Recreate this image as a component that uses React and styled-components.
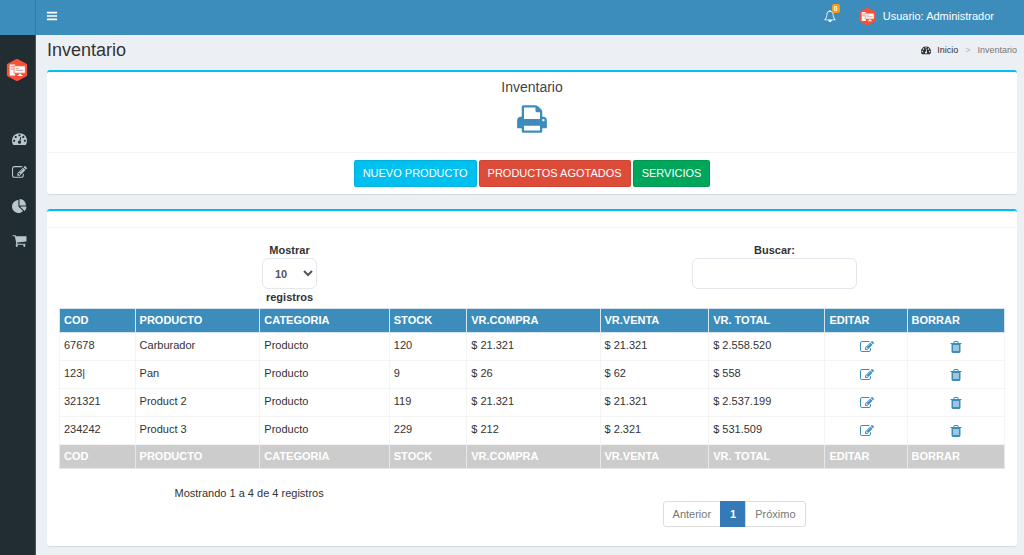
import React from 'react';
import styled, { createGlobalStyle } from 'styled-components';

const icons = {
  bars: 'M1664 1344v128q0 26-19 45t-45 19h-1408q-26 0-45-19t-19-45v-128q0-26 19-45t45-19h1408q26 0 45 19t19 45zm0-512v128q0 26-19 45t-45 19h-1408q-26 0-45-19t-19-45v-128q0-26 19-45t45-19h1408q26 0 45 19t19 45zm0-512v128q0 26-19 45t-45 19h-1408q-26 0-45-19t-19-45v-128q0-26 19-45t45-19h1408q26 0 45 19t19 45z',
  bell: 'M912 1696q0-16-16-16-59 0-101.5-42.5t-42.5-101.5q0-16-16-16t-16 16q0 73 51.5 124.5t124.5 51.5q16 0 16-16zm-666-288h1300q-266-300-266-832 0-51-24-105t-69-103-121.5-80.5-169.5-31.5-169.5 31.5-121.5 80.5-69 103-24 105q0 532-266 832zm1482 0q0 52-38 90t-90 38h-448q0 106-75 181t-181 75-181-75-75-181h-448q-52 0-90-38t-38-90q50-42 91-88t85-119.5 74.5-158.5 50-206 19.5-260q0-152 117-282.5t307-158.5q-8-19-8-39 0-40 28-68t68-28 68 28 28 68q0 20-8 39 190 28 307 158.5t117 282.5q0 139 19.5 260t50 206 74.5 158.5 85 119.5 91 88z',
  dashboard: 'M384 1152q0-53-37.5-90.5t-90.5-37.5-90.5 37.5-37.5 90.5 37.5 90.5 90.5 37.5 90.5-37.5 37.5-90.5zm192-448q0-53-37.5-90.5t-90.5-37.5-90.5 37.5-37.5 90.5 37.5 90.5 90.5 37.5 90.5-37.5 37.5-90.5zm428 481l101-382q6-26-7.5-48.5t-38.5-29.5-48 6.5-30 39.5l-101 382q-60 5-107 43.5t-63 98.5q-20 77 20 146t117 89 146-20 89-117q16-60-6-117t-72-91zm660-33q0-53-37.5-90.5t-90.5-37.5-90.5 37.5-37.5 90.5 37.5 90.5 90.5 37.5 90.5-37.5 37.5-90.5zm-640-640q0-53-37.5-90.5t-90.5-37.5-90.5 37.5-37.5 90.5 37.5 90.5 90.5 37.5 90.5-37.5 37.5-90.5zm448 192q0-53-37.5-90.5t-90.5-37.5-90.5 37.5-37.5 90.5 37.5 90.5 90.5 37.5 90.5-37.5 37.5-90.5zm320 448q0 261-141 483-19 29-54 29h-1402q-35 0-54-29-141-221-141-483 0-182 71-348t191-286 286-191 348-71 348 71 286 191 191 286 71 348z',
  edit: 'M888 1184l116-116-152-152-116 116v56h96v96h56zm440-720q-16-16-33 1l-350 350q-17 17-1 33t33-1l350-350q17-17 1-33zm80 594v190q0 119-84.5 203.5t-203.5 84.5h-832q-119 0-203.5-84.5t-84.5-203.5v-832q0-119 84.5-203.5t203.5-84.5h832q63 0 117 25 15 7 18 23 3 17-9 29l-49 49q-14 14-32 8-23-6-45-6h-832q-66 0-113 47t-47 113v832q0 66 47 113t113 47h832q66 0 113-47t47-113v-126q0-13 9-22l64-64q15-15 35-7t20 29zm-96-738l288 288-672 672h-288v-288zm444 132l-92 92-288-288 92-92q28-28 68-28t68 28l152 152q28 28 28 68t-28 68z',
  pie: 'M768 890l546 546q-106 108-247.5 168t-298.5 60q-209 0-385.5-103t-279.5-279.5-103-385.5 103-385.5 279.5-279.5 385.5-103v762zm187 6h773q0 157-60 298.5t-168 247.5zm709-128h-768v-768q209 0 385.5 103t279.5 279.5 103 385.5z',
  cart: 'M704 1536q0 52-38 90t-90 38-90-38-38-90 38-90 90-38 90 38 38 90zm896 0q0 52-38 90t-90 38-90-38-38-90 38-90 90-38 90 38 38 90zm128-1088v512q0 24-16.5 42.5t-40.5 21.5l-1044 122q13 60 13 70 0 16-24 64h920q26 0 45 19t19 45-19 45-45 19h-1024q-26 0-45-19t-19-45q0-11 8-31.5t16-36 21.5-40 15.5-29.5l-177-823h-204q-26 0-45-19t-19-45 19-45 45-19h256q16 0 28.5 6.5t19.5 15.5 13 24.5 8 26 5.5 29.5 4.5 26h1201q26 0 45 19t19 45z',
  print: 'M448 1536h896v-256h-896v256zm0-640h896v-384h-160q-40 0-68-28t-28-68v-160h-640v640zm1152 64q0-26-19-45t-45-19-45 19-19 45 19 45 45 19 45-19 19-45zm128 0v416q0 13-9.5 22.5t-22.5 9.5h-224v160q0 40-28 68t-68 28h-960q-40 0-68-28t-28-68v-160h-224q-13 0-22.5-9.5t-9.5-22.5v-416q0-79 56.5-135.5t135.5-56.5h64v-544q0-40 28-68t68-28h672q40 0 88 20t76 48l152 152q28 28 48 76t20 88v256h64q79 0 135.5 56.5t56.5 135.5z',
  trash: 'M704 1376v-704q0-14-9-23t-23-9h-64q-14 0-23 9t-9 23v704q0 14 9 23t23 9h64q14 0 23-9t9-23zm256 0v-704q0-14-9-23t-23-9h-64q-14 0-23 9t-9 23v704q0 14 9 23t23 9h64q14 0 23-9t9-23zm256 0v-704q0-14-9-23t-23-9h-64q-14 0-23 9t-9 23v704q0 14 9 23t23 9h64q14 0 23-9t9-23zm-544-992h448l-48-117q-7-9-17-11h-317q-10 2-17 11zm928 32v64q0 14-9 23t-23 9h-96v948q0 83-47 143.5t-113 60.5h-832q-66 0-113-58.5t-47-141.5v-952h-96q-14 0-23-9t-9-23v-64q0-14 9-23t23-9h309l70-167q15-37 54-63t79-26h320q40 0 79 26t54 63l70 167h309q14 0 23 9t9 23z',
};

const menuList = [
  { name: 'Inicio', icon: 'dashboard' },
  { name: 'Inventario', icon: 'edit' },
  { name: 'Reportes', icon: 'pie' },
  { name: 'Ventas', icon: 'cart' },
];

const columns = [
  { name: 'COD', width: '8%' },
  { name: 'PRODUCTO', width: '13.2%' },
  { name: 'CATEGORIA', width: '13.7%' },
  { name: 'STOCK', width: '8.2%' },
  { name: 'VR.COMPRA', width: '14.1%' },
  { name: 'VR.VENTA', width: '11.5%' },
  { name: 'VR. TOTAL', width: '12.3%' },
  { name: 'EDITAR', width: '8.7%' },
  { name: 'BORRAR', width: '10.3%' },
];

const products = [
  ['67678', 'Carburador', 'Producto', '120', '$ 21.321', '$ 21.321', '$ 2.558.520'],
  ['123|', 'Pan', 'Producto', '9', '$ 26', '$ 62', '$ 558'],
  ['321321', 'Product 2', 'Producto', '119', '$ 21.321', '$ 21.321', '$ 2.537.199'],
  ['234242', 'Product 3', 'Producto', '229', '$ 212', '$ 2.321', '$ 531.509'],
];

const Icon = ({ name, size = 14 }) => (
  <IconSvg viewBox="0 0 1792 1792" $size={size} aria-hidden="true">
    <path d={icons[name]} />
  </IconSvg>
);

const Logo = ({ size }) => (
  <LogoSvg viewBox="0 0 24 26" $size={size} aria-hidden="true">
    <path
      d="M12 2.500L21.500 7.500V18.500L12 23.500L2.500 18.500V7.500Z"
      fill="#fb4f38"
      stroke="#fb4f38"
      strokeWidth="3"
      strokeLinejoin="round"
    />
    <path d="M4 7h6v12H4z" fill="#fff" />
    <path d="M5 9.500h3M5 12h3" stroke="#fb4f38" strokeWidth="0.900" />
    <path d="M8.800 8.500h12.200v8h-12.200z" fill="#fff" stroke="#fb4f38" strokeWidth="0.800" />
    <path d="M10.500 11.200h4M10.500 13.300h8.500" stroke="#b98f8a" strokeWidth="0.900" />
    <path d="M14 17h2.500v1.500H18v1h-5.500v-1H14z" fill="#fff" />
  </LogoSvg>
);

const App = () => {
  return (
    <>
      <GlobalStyle />
      <Layout>
        <Brand href="#" aria-label="Inicio" />
        <Header>
          <IconButton aria-label="Menú">
            <Icon name="bars" size={12} />
          </IconButton>
          <UserMenu>
            <NoticeButton aria-label="Notificaciones">
              <Icon name="bell" size={12} />
              <Badge>0</Badge>
            </NoticeButton>
            <UserLink href="#">
              <Logo size={19} />
              Usuario: Administrador
            </UserLink>
          </UserMenu>
        </Header>

        <Sidebar>
          <SidebarLogo>
            <Logo size={24} />
          </SidebarLogo>
          {menuList.map(({ name, icon }) => (
            <SidebarLink key={name} href="#" aria-label={name}>
              <Icon name={icon} size={15} />
            </SidebarLink>
          ))}
        </Sidebar>

        <Content>
          <ContentHeader>
            <h1>Inventario</h1>
            <Breadcrumb>
              <BreadcrumbLink href="#">
                <Icon name="dashboard" size={10} />
                Inicio
              </BreadcrumbLink>
              <Separator>&gt;</Separator>
              <span>Inventario</span>
            </Breadcrumb>
          </ContentHeader>

          <Box>
            <TitleArea>
              <h2>Inventario</h2>
              <PrintLink href="#" aria-label="Imprimir">
                <Icon name="print" size={32} />
              </PrintLink>
            </TitleArea>
            <Actions>
              <ActionButton $color="#00c0ef">NUEVO PRODUCTO</ActionButton>
              <ActionButton $color="#dd4b39">PRODUCTOS AGOTADOS</ActionButton>
              <ActionButton $color="#00a65a">SERVICIOS</ActionButton>
            </Actions>
          </Box>

          <Box>
            <BoxStrip />
            <Filters>
              <Field>
                <label htmlFor="length">Mostrar</label>
                <LengthSelect id="length" defaultValue="10">
                  <option>10</option>
                  <option>25</option>
                  <option>50</option>
                  <option>100</option>
                </LengthSelect>
                <label htmlFor="length">registros</label>
              </Field>
              <Field>
                <label htmlFor="search">Buscar:</label>
                <SearchInput id="search" type="search" />
              </Field>
            </Filters>

            <TableArea>
              <Table>
                <colgroup>
                  {columns.map(({ name, width }) => (
                    <Col key={name} $width={width} />
                  ))}
                </colgroup>
                <thead>
                  <tr>
                    {columns.map(({ name }) => (
                      <HeadCell key={name}>{name}</HeadCell>
                    ))}
                  </tr>
                </thead>
                <tbody>
                  {products.map(product => (
                    <tr key={product[0]}>
                      {product.map((value, index) => (
                        <Cell key={index}>{value}</Cell>
                      ))}
                      <IconCell>
                        <CellLink href="#" aria-label={`Editar ${product[1]}`}>
                          <Icon name="edit" />
                        </CellLink>
                      </IconCell>
                      <IconCell>
                        <CellLink href="#" aria-label={`Borrar ${product[1]}`}>
                          <Icon name="trash" />
                        </CellLink>
                      </IconCell>
                    </tr>
                  ))}
                </tbody>
                <tfoot>
                  <tr>
                    {columns.map(({ name }) => (
                      <FootCell key={name}>{name}</FootCell>
                    ))}
                  </tr>
                </tfoot>
              </Table>
            </TableArea>

            <TableFooter>
              <Info>Mostrando 1 a 4 de 4 registros</Info>
              <Pagination aria-label="Páginas">
                <PageLink href="#">Anterior</PageLink>
                <PageLink href="#" $active>
                  1
                </PageLink>
                <PageLink href="#">Próximo</PageLink>
              </Pagination>
            </TableFooter>
          </Box>
        </Content>
      </Layout>
    </>
  );
};

const GlobalStyle = createGlobalStyle`
  * {
    box-sizing: border-box;
  }

  body {
    margin: 0;
    background-color: #ecf0f5;
    color: #333;
    font-family: 'Liberation Sans', Arial, sans-serif;
    font-size: 11px;
    line-height: 16px;
  }

  h1,
  h2 {
    margin: 0;
    font-weight: 400;
  }

  a {
    text-decoration: none;
  }

  button,
  input,
  select {
    font: inherit;
  }
`;

const IconSvg = styled.svg`
  display: block;
  flex: none;
  width: ${({ $size }) => $size}px;
  height: ${({ $size }) => $size}px;
  fill: currentColor;
`;

const LogoSvg = styled.svg`
  display: block;
  flex: none;
  width: ${({ $size }) => $size}px;
  height: ${({ $size }) => $size}px;
`;

const Layout = styled.div`
  display: grid;
  grid-template-columns: 36px minmax(0, 1fr);
  grid-template-rows: 35px 1fr;
  min-height: 100vh;
`;

const Brand = styled.a`
  background-color: #3c8dbc;
  border-right: 1px solid #3379a3;
`;

const Header = styled.header`
  display: flex;
  align-items: center;
  justify-content: space-between;
  padding: 0 30px 3px 10px;
  background-color: #3c8dbc;
  color: #fff;
`;

const IconButton = styled.button`
  padding: 0;
  border: 0;
  background: none;
  color: inherit;
`;

const UserMenu = styled.div`
  display: flex;
  align-items: center;
  gap: 22px;
`;

const NoticeButton = styled(IconButton)`
  position: relative;
`;

const Badge = styled.span`
  position: absolute;
  top: -6px;
  left: 8px;
  width: 8px;
  border-radius: 2px;
  background-color: #f39c12;
  font-size: 7px;
  font-weight: 700;
  line-height: 9px;
  text-align: center;
`;

const UserLink = styled.a`
  display: flex;
  align-items: center;
  gap: 6px;
  color: #fff;
`;

const Sidebar = styled.nav`
  background-color: #222d32;
  border-right: 1px solid #4a555a;
`;

const SidebarLogo = styled.div`
  padding: 23px 5px 39px;
`;

const SidebarLink = styled.a`
  display: flex;
  align-items: center;
  height: 34px;
  padding-left: 12px;
  color: #b8c7ce;
`;

const Content = styled.main`
  padding: 0 7px 9px 11px;
`;

const ContentHeader = styled.div`
  display: flex;
  align-items: center;
  justify-content: space-between;
  height: 35px;
  padding-bottom: 6px;

  & h1 {
    font-size: 18px;
    line-height: 20px;
  }
`;

const Breadcrumb = styled.nav`
  display: flex;
  align-items: center;
  color: #777;
  font-size: 9px;
`;

const BreadcrumbLink = styled.a`
  display: flex;
  align-items: center;
  gap: 6px;
  color: #333;
`;

const Separator = styled.span`
  padding: 0 7px;
  color: #bbb;
`;

const Box = styled.section`
  border-top: 2px solid #00c0ef;
  border-radius: 3px;
  background-color: #fff;
  box-shadow: 0 1px 1px rgba(0 0 0 / 10%);

  & + & {
    margin-top: 15px;
  }
`;

const TitleArea = styled.div`
  display: flex;
  flex-direction: column;
  align-items: center;
  height: 81px;
  padding-top: 7px;
  border-bottom: 1px solid #f4f4f4;

  & h2 {
    color: #444;
    font-size: 14px;
  }
`;

const PrintLink = styled.a`
  margin-top: 8px;
  color: #3c8dbc;
`;

const Actions = styled.div`
  display: flex;
  justify-content: center;
  gap: 2px;
  padding: 7px;
`;

const ActionButton = styled.button`
  height: 27px;
  padding: 0 8px 2px;
  border: 1px solid rgba(0 0 0 / 8%);
  border-radius: 2px;
  background-color: ${({ $color }) => $color};
  color: #fff;
`;

const BoxStrip = styled.div`
  height: 17px;
  border-bottom: 1px solid #f4f4f4;
`;

const Filters = styled.div`
  display: grid;
  grid-template-columns: 1fr 1fr;
  padding-top: 14px;
`;

const Field = styled.div`
  display: flex;
  flex-direction: column;
  align-items: center;
  font-weight: 700;
`;

const LengthSelect = styled.select`
  width: 55px;
  height: 31px;
  padding: 4px 8px;
  border: 1px solid #e3e6ed;
  border-radius: 6px;
  background-color: #fff;
  color: #555;
`;

const SearchInput = styled.input`
  width: 165px;
  height: 31px;
  padding: 4px 8px;
  border: 1px solid #e3e6ed;
  border-radius: 6px;
  background-color: #fff;
  font-weight: 400;
`;

const TableArea = styled.div`
  padding: 3px 12px 0;
`;

const Table = styled.table`
  width: 100%;
  table-layout: fixed;
  border-collapse: collapse;
`;

const Col = styled.col`
  width: ${({ $width }) => $width};
`;

const HeadCell = styled.th`
  height: 24px;
  padding: 0 4px 2px;
  border: 1px solid #d5e4ee;
  background-color: #3c8dbc;
  color: #fff;
  text-align: left;
`;

const FootCell = styled(HeadCell)`
  border-color: #e8e8e8;
  background-color: #ccc;
`;

const Cell = styled.td`
  height: 28px;
  padding: 4px;
  border: 1px solid #f4f4f4;
  vertical-align: top;
`;

const IconCell = styled(Cell)`
  padding: 7px 3px 0 4px;
`;

const CellLink = styled.a`
  display: flex;
  justify-content: center;
  color: #3c8dbc;
`;

const TableFooter = styled.div`
  display: grid;
  grid-template-columns: 5fr 7fr;
  padding: 16px 0 19px;
`;

const Info = styled.div`
  text-align: center;
`;

const Pagination = styled.nav`
  display: flex;
  justify-content: center;
  padding-top: 16px;
`;

const PageLink = styled.a`
  margin-left: -1px;
  padding: 4px 9px;
  border: 1px solid ${({ $active }) => ($active ? '#337ab7' : '#ddd')};
  background-color: ${({ $active }) => ($active ? '#337ab7' : '#fff')};
  color: ${({ $active }) => ($active ? '#fff' : '#777')};
  font-weight: ${({ $active }) => ($active ? 700 : 400)};

  &:first-child {
    margin-left: 0;
    border-radius: 3px 0 0 3px;
  }

  &:last-child {
    border-radius: 0 3px 3px 0;
  }
`;

export default App;
